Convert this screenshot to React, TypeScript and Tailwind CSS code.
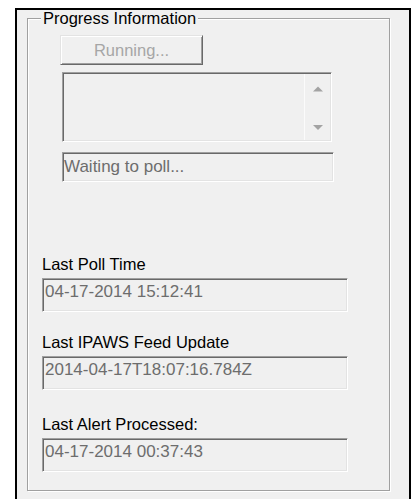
const sunken =
  'border border-t-[#a0a0a0] border-l-[#a0a0a0] border-b-white border-r-white shadow-[inset_1px_1px_0_#696969,inset_-1px_-1px_0_#e3e3e3] bg-[#f0f0f0]';

const stats = [
  { label: 'Last Poll Time', value: '04-17-2014 15:12:41', mt: 'mt-[73px]' },
  { label: 'Last IPAWS Feed Update', value: '2014-04-17T18:07:16.784Z', mt: 'mt-[21px]' },
  { label: 'Last Alert Processed:', value: '04-17-2014 00:37:43', mt: 'mt-[25px]' },
];

function ScrollArrows() {
  return (
    <svg width="25" height="66" viewBox="0 0 25 66" className="block">
      <polygon points="8,17.5 13,12.5 18,17.5" fill="#a3a3a3" />
      <polygon points="8,51 18,51 13,56" fill="#a3a3a3" />
    </svg>
  );
}

export default function App() {
  return (
    <div className="w-[411px] h-[499px] overflow-hidden bg-white font-['Liberation_Sans',Arial,sans-serif] text-[16.5px] text-black">
      <div className="ml-[15px] mt-[8px] h-[520px] border-2 border-black bg-[#f0f0f0] pt-[8px] pl-[10px]">
        {/* group box */}
        <div className="relative flex h-[473px] w-[363px] flex-col border border-[#a0a0a0] shadow-[1px_1px_0_#fff,inset_1px_1px_0_#fff]">
          <span className="absolute left-[13px] top-[-9px] bg-[#f0f0f0] px-[2px] leading-[16px]">
            Progress Information
          </span>

          <div className="ml-[32px] mt-[16px] flex h-[30px] w-[143px] items-center justify-center border border-t-[#e3e3e3] border-l-[#e3e3e3] border-b-[#696969] border-r-[#696969] bg-[#f0f0f0] leading-[18px] text-[#a6a6a6] shadow-[inset_1px_1px_0_#fff,inset_-1px_-1px_0_#a0a0a0]">
            Running...
          </div>

          <div className={`ml-[34px] mt-[7px] flex h-[70px] w-[270px] justify-end p-[1px] ${sunken}`}>
            <div className="h-full w-[26px] border-l border-[#fbfbfb]">
              <ScrollArrows />
            </div>
          </div>

          <div className={`ml-[34px] mt-[10px] h-[30px] w-[272px] pl-[1px] pt-[5px] text-[17px] leading-[18px] text-[#6d6d6d] ${sunken}`}>
            Waiting to poll...
          </div>

          {stats.map((s) => (
            <div key={s.label} className={`ml-[14px] ${s.mt}`}>
              <div className="leading-[18px]">{s.label}</div>
              <div className={`mt-[5px] h-[34px] w-[306px] pl-[2px] pt-[4px] text-[17px] leading-[18px] text-[#6d6d6d] ${sunken}`}>
                {s.value}
              </div>
            </div>
          ))}
        </div>
      </div>
    </div>
  );
}
